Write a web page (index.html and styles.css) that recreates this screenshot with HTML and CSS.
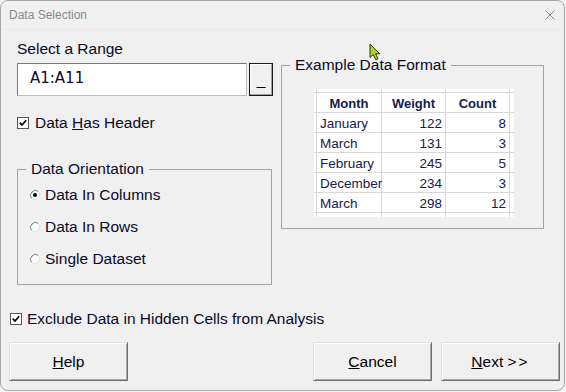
FILE: index.html
```html
<!DOCTYPE html>
<html lang="en">

<head>
    <meta charset="UTF-8">
    <meta name="viewport" content="width=device-width, initial-scale=1.0">
    <title>Data Selection</title>
    <link rel="stylesheet" href="styles.css">
</head>

<body>
    <div class="window">
        <div class="titlebar">
            <span class="title">Data Selection</span>
            <svg class="close" width="10" height="10" viewBox="0 0 10 10">
                <path d="M0.5 0.5 L9.5 9.5 M9.5 0.5 L0.5 9.5" stroke="#8a8a8a" stroke-width="1" fill="none" />
            </svg>
        </div>

        <div class="content">
            <div class="top">
                <div class="left-col">
                    <div class="field-label">Select a Range</div>
                    <div class="range-row">
                        <div class="range-input">A1:A11</div>
                        <button class="range-button">_</button>
                    </div>

                    <label class="check-row">
                        <svg width="12" height="12" viewBox="0 0 12 12">
                            <rect x="0.5" y="0.5" width="11" height="11" fill="#fff" stroke="#555" />
                            <path d="M2.8 5.6 L5 8 L9.2 3.2" stroke="#000" stroke-width="1.7" fill="none" />
                        </svg>
                        <span>Data <u>H</u>as Header</span>
                    </label>

                    <fieldset class="group orientation">
                        <legend>Data Orientation</legend>
                        <div class="radio-list">
                            <div class="radio-row">
                                <svg width="12" height="12" viewBox="0 0 12 12">
                                    <circle cx="6" cy="6" r="5" fill="#fff" />
                                    <path d="M2.5 9.5 A5 5 0 0 1 9.5 2.5" stroke="#7a7a7a" fill="none" />
                                    <path d="M9.5 2.5 A5 5 0 0 1 2.5 9.5" stroke="#dedede" fill="none" />
                                    <circle cx="6" cy="6" r="2" fill="#000" />
                                </svg>
                                <span>Data In Columns</span>
                            </div>
                            <div class="radio-row">
                                <svg width="12" height="12" viewBox="0 0 12 12">
                                    <circle cx="6" cy="6" r="5" fill="#fff" />
                                    <path d="M2.5 9.5 A5 5 0 0 1 9.5 2.5" stroke="#7a7a7a" fill="none" />
                                    <path d="M9.5 2.5 A5 5 0 0 1 2.5 9.5" stroke="#dedede" fill="none" />
                                </svg>
                                <span>Data In Rows</span>
                            </div>
                            <div class="radio-row">
                                <svg width="12" height="12" viewBox="0 0 12 12">
                                    <circle cx="6" cy="6" r="5" fill="#fff" />
                                    <path d="M2.5 9.5 A5 5 0 0 1 9.5 2.5" stroke="#7a7a7a" fill="none" />
                                    <path d="M9.5 2.5 A5 5 0 0 1 2.5 9.5" stroke="#dedede" fill="none" />
                                </svg>
                                <span>Single Dataset</span>
                            </div>
                        </div>
                    </fieldset>
                </div>

                <fieldset class="group example">
                    <legend>Example Data Format</legend>
                    <div class="sheet">
                        <table>
                            <tr>
                                <th>Month</th>
                                <th>Weight</th>
                                <th>Count</th>
                            </tr>
                            <tr>
                                <td>January</td>
                                <td class="num">122</td>
                                <td class="num">8</td>
                            </tr>
                            <tr>
                                <td>March</td>
                                <td class="num">131</td>
                                <td class="num">3</td>
                            </tr>
                            <tr>
                                <td>February</td>
                                <td class="num">245</td>
                                <td class="num">5</td>
                            </tr>
                            <tr>
                                <td>December</td>
                                <td class="num">234</td>
                                <td class="num">3</td>
                            </tr>
                            <tr>
                                <td>March</td>
                                <td class="num">298</td>
                                <td class="num">12</td>
                            </tr>
                        </table>
                    </div>
                </fieldset>
            </div>

            <label class="check-row exclude">
                <svg width="12" height="12" viewBox="0 0 12 12">
                    <rect x="0.5" y="0.5" width="11" height="11" fill="#fff" stroke="#555" />
                    <path d="M2.8 5.6 L5 8 L9.2 3.2" stroke="#000" stroke-width="1.7" fill="none" />
                </svg>
                <span>Exclude Data in Hidden Cells from Analysis</span>
            </label>

            <div class="button-row">
                <button class="btn help"><u>H</u>elp</button>
                <button class="btn"><u>C</u>ancel</button>
                <button class="btn"><u>N</u>ext <span class="arrows">&gt;&gt;</span></button>
            </div>
        </div>

        <!-- mouse pointer sitting over the dialog -->
        <svg class="cursor" width="13" height="18" viewBox="0 0 13 18">
            <path d="M1 1 L1 14.5 L4.2 11.6 L6.8 16.8 L9 15.8 L6.6 10.8 L10.8 10.8 Z" fill="#a9d51f" stroke="#2f3a08" stroke-width="1" />
        </svg>
    </div>
</body>

</html>
```

FILE: styles.css
```css
* {
    box-sizing: border-box;
}

body {
    margin: 0;
    background: #f3f3f3;
    font-family: "Liberation Sans", Arial, sans-serif;
    font-size: 15.5px;
    color: #0a0a28;
}

.window {
    position: relative;
    width: 565px;
    height: 391px;
    border: 1px solid #a6a6a6;
    border-radius: 8px;
    background: #f0f0f0;
    display: flex;
    flex-direction: column;
    overflow: hidden;
}

.titlebar {
    flex: none;
    height: 29px;
    display: flex;
    align-items: center;
    justify-content: space-between;
    padding: 0 9px 0 8px;
    border-bottom: 1px solid #e9e9e9;
    font-size: 12px;
    color: #8a8a8a;
}

.close {
    display: block;
}

.content {
    flex: 1;
    padding: 0 4px 0 8px;
}

.top {
    display: flex;
    align-items: flex-start;
    gap: 8px;
    margin-left: 8px;
}

.left-col {
    width: 256px;
    padding-top: 10px;
}

.field-label {
    line-height: 18px;
}

.range-row {
    display: flex;
    gap: 2px;
    margin-top: 5px;
}

.range-input {
    width: 230px;
    height: 33px;
    display: flex;
    align-items: center;
    padding: 0 0 3px 12px;
    background: #fff;
    border: 1px solid;
    border-color: #7a7a7a #bcbcbc #bcbcbc #7a7a7a;
    font-family: "DejaVu Sans", Verdana, sans-serif;
    font-size: 15px;
}

.range-button {
    width: 24px;
    height: 33px;
    padding: 0;
    border: 1px solid #1a1a1a;
    background: #f0f0f0;
    box-shadow: inset -1px -1px #a0a0a0, inset 1px 1px #fff;
    font: inherit;
    color: #000;
}

.check-row {
    display: flex;
    align-items: center;
    gap: 6px;
    height: 18px;
    line-height: 18px;
    margin-top: 18px;
}

.check-row svg,
.radio-row svg {
    flex: none;
    display: block;
}

.group {
    margin: 0;
    padding: 0;
    min-width: 0;
    border: 1px solid #a3a3a3;
}

.group legend {
    margin-left: 8px;
    padding: 0 5px;
    line-height: 18px;
}

.orientation {
    width: 255px;
    margin-top: 28px;
}

.radio-list {
    display: flex;
    flex-direction: column;
    gap: 14px;
    padding: 8px 0 16px 11px;
}

.radio-row {
    display: flex;
    align-items: center;
    gap: 4px;
    height: 18px;
    line-height: 18px;
}

.example {
    width: 263px;
    margin-top: 26px;
    padding: 15px 0 11px 0;
}

.sheet {
    width: 200px;
    height: 128px;
    margin-left: 32px;
    overflow: hidden;
    background-color: #fff;
    background-image:
        linear-gradient(to right, transparent 2px, #d8d8d8 2px 3px, transparent 3px 67px, #d8d8d8 67px 68px, transparent 68px 131px, #d8d8d8 131px 132px, transparent 132px 195px, #d8d8d8 195px 196px, transparent 196px),
        linear-gradient(to bottom, #d8d8d8 1px, transparent 1px);
    background-size: 100% 100%, 100% 20px;
    background-position: 0 0, 0 3px;
    background-repeat: no-repeat, repeat-y;
}

.sheet table {
    margin: 4px 0 0 3px;
    border-collapse: collapse;
    table-layout: fixed;
    width: 193px;
    color: #13204d;
}

.sheet th,
.sheet td {
    height: 20px;
    padding: 1px 4px 0 3px;
    line-height: 19px;
    white-space: nowrap;
    overflow: visible;
}

.sheet th {
    font-size: 13px;
    font-weight: bold;
    text-align: center;
    padding: 0 1px 0 0;
}

.sheet td {
    font-size: 13.5px;
    text-align: left;
}

.sheet th:first-child,
.sheet td:first-child {
    width: 65px;
}

.sheet th:nth-child(2),
.sheet th:nth-child(3),
.sheet td:nth-child(2),
.sheet td:nth-child(3) {
    width: 64px;
}

.sheet td.num {
    text-align: right;
}

.exclude {
    margin-top: 25px;
    margin-left: 1px;
    gap: 5px;
}

.button-row {
    display: flex;
    gap: 9px;
    margin-top: 14px;
}

.btn {
    width: 119px;
    height: 39px;
    padding: 0;
    border: 1px solid;
    border-color: #e0e0e0 #6e6e6e #6e6e6e #e0e0e0;
    background: #f0f0f0;
    box-shadow: inset 1px 1px #fff, inset -1px -1px #a8a8a8;
    font: inherit;
    color: #000;
}

.btn .arrows {
    letter-spacing: 2px;
}

.help {
    margin-right: auto;
}

.cursor {
    position: absolute;
    left: 368px;
    top: 42px;
}
```
